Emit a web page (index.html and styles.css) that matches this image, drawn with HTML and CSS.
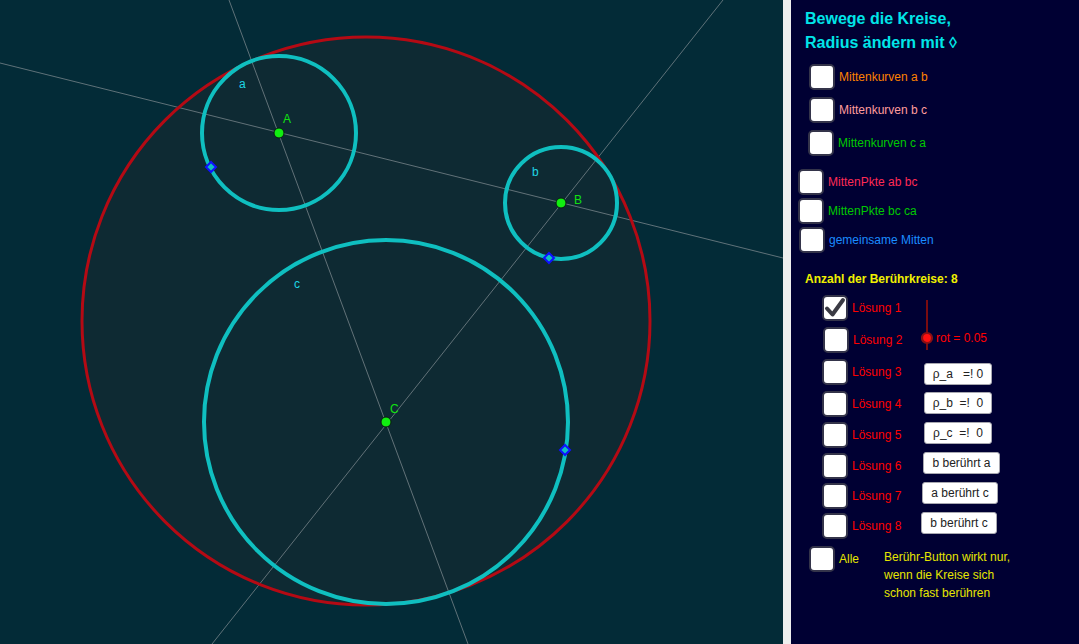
FILE: index.html
```html
<!DOCTYPE html>
<html lang="de">
<head>
<meta charset="utf-8">
<title>Berührkreise</title>
<link rel="stylesheet" href="styles.css">
</head>
<body>
<div class="app">
  <div class="canvas">
    <svg width="783" height="644" viewBox="0 0 783 644" xmlns="http://www.w3.org/2000/svg">
      <rect x="0" y="0" width="783" height="644" fill="#032b37"/>
      <circle cx="366" cy="321" r="284" fill="#0e2a33" stroke="none"/>
      <g stroke="#7d8a8f" stroke-width="1" stroke-opacity="0.75">
        <line x1="0" y1="63" x2="783" y2="258"/>
        <line x1="229" y1="0" x2="468" y2="644"/>
        <line x1="723" y1="0" x2="212" y2="644"/>
      </g>
      <circle cx="366" cy="321" r="284" fill="none" stroke="#b40a14" stroke-width="3"/>
      <g fill="none" stroke="#0fbfc0" stroke-width="4">
        <circle cx="279" cy="133" r="77"/>
        <circle cx="561" cy="203" r="56"/>
        <circle cx="386" cy="422" r="182"/>
      </g>
      <g fill="#0fbfc0" stroke="#1010ff" stroke-width="2">
        <polygon points="211,162 216,167 211,172 206,167"/>
        <polygon points="549,253 554,258 549,263 544,258"/>
        <polygon points="565,445 570,450 565,455 560,450"/>
      </g>
      <g fill="#11ee11" stroke="#0a1a10" stroke-width="1">
        <circle cx="279" cy="133" r="5"/>
        <circle cx="561" cy="203" r="5"/>
        <circle cx="386" cy="422" r="5"/>
      </g>
      <g class="lbl">
        <text x="239" y="88" fill="#1ed6e6">a</text>
        <text x="283" y="123" fill="#11e011">A</text>
        <text x="532" y="176" fill="#1ed6e6">b</text>
        <text x="574" y="204" fill="#11e011">B</text>
        <text x="294" y="288" fill="#1ed6e6">c</text>
        <text x="390" y="413" fill="#11e011">C</text>
      </g>
    </svg>
  </div>
  <div class="divider"></div>
  <div class="panel">
    <h1 class="title">Bewege die Kreise,<br>Radius ändern mit ◊</h1>

    <div class="group group-curves">
      <div class="row"><span class="box"></span><span class="c-orange">Mittenkurven a b</span></div>
      <div class="row"><span class="box"></span><span class="c-pink">Mittenkurven b c</span></div>
      <div class="row shift"><span class="box"></span><span class="c-green">Mittenkurven c a</span></div>
    </div>

    <div class="group group-points">
      <div class="row"><span class="box"></span><span class="c-crimson">MittenPkte ab bc</span></div>
      <div class="row"><span class="box"></span><span class="c-green">MittenPkte bc ca</span></div>
      <div class="row nudge"><span class="box"></span><span class="c-blue">gemeinsame Mitten</span></div>
    </div>

    <div class="heading">Anzahl der Berührkreise: 8</div>

    <div class="solutions">
      <div class="row"><span class="box checked"><svg width="22" height="22" viewBox="0 0 22 22"><path d="M3 11.5 L8.5 17.5 L19 3" fill="none" stroke="#3a3a44" stroke-width="4" stroke-linecap="round" stroke-linejoin="round"/></svg></span><span class="c-red">Lösung 1</span></div>
      <div class="slider">
        <svg width="14" height="58" viewBox="0 0 14 58">
          <line x1="6" y1="5" x2="6" y2="55" stroke="#7a0c10" stroke-width="2"/>
          <circle cx="6" cy="43" r="5" fill="#ff1010" stroke="#8a1014" stroke-width="2.2"/>
        </svg>
        <span class="c-red slider-label">rot = 0.05</span>
      </div>
      <div class="row r2"><span class="box"></span><span class="c-red">Lösung 2</span></div>
      <div class="row"><span class="box"></span><span class="c-red">Lösung 3</span></div>
      <div class="btn w68 m4">ρ_a   =! 0</div>
      <div class="row"><span class="box"></span><span class="c-red">Lösung 4</span></div>
      <div class="btn w68 m1">ρ_b  =!  0</div>
      <div class="row"><span class="box"></span><span class="c-red">Lösung 5</span></div>
      <div class="btn w68 m0">ρ_c  =!  0</div>
      <div class="row"><span class="box"></span><span class="c-red">Lösung 6</span></div>
      <div class="btn b1 mn">b berührt a</div>
      <div class="row"><span class="box"></span><span class="c-red">Lösung 7</span></div>
      <div class="btn b2 mn">a berührt c</div>
      <div class="row"><span class="box"></span><span class="c-red">Lösung 8</span></div>
      <div class="btn b3 mn">b berührt c</div>
    </div>

    <div class="footer">
      <div class="row"><span class="box"></span><span class="c-yellow">Alle</span></div>
      <p class="note">Berühr-Button wirkt nur,<br>wenn die Kreise sich<br>schon fast berühren</p>
    </div>
  </div>
</div>
</body>
</html>
```

FILE: styles.css
```css
* { box-sizing: border-box; }

html, body {
  margin: 0;
  padding: 0;
  background: #000033;
}

body {
  font-family: "Liberation Sans", Arial, "DejaVu Sans", sans-serif;
  font-size: 12px;
}

.app {
  display: flex;
  width: 1079px;
  height: 644px;
  overflow: hidden;
}

.canvas {
  width: 783px;
  height: 644px;
  flex: none;
}

.canvas svg { display: block; }

.lbl text {
  font-family: "Liberation Sans", Arial, sans-serif;
  font-size: 12px;
}

.divider {
  width: 8px;
  flex: none;
  background: #eeeeee;
}

.panel {
  flex: 1;
  background: #000033;
  padding: 7px 0 0 0;
  display: flex;
  flex-direction: column;
}

.title {
  margin: 0 0 0 14px;
  font-size: 16px;
  font-weight: bold;
  line-height: 24px;
  color: #00e5e8;
}

.row {
  display: flex;
  align-items: center;
  gap: 4px;
  height: 26px;
  white-space: nowrap;
}

.box {
  width: 26px;
  height: 26px;
  flex: none;
  background: #ffffff;
  border: 2px solid #34344a;
  border-radius: 5px;
  display: flex;
  align-items: center;
  justify-content: center;
}

.group {
  display: flex;
  flex-direction: column;
}

.group-curves {
  margin-top: 9px;
  padding-left: 18px;
  gap: 7px;
}

.group-curves .shift { margin-left: -1px; }

.group-points {
  margin-top: 13px;
  padding-left: 7px;
  gap: 3px;
}

.group-points .nudge { margin-left: 1px; }

.heading {
  margin: 19px 0 0 14px;
  line-height: 15px;
  font-weight: bold;
  color: #f0f000;
}

.solutions {
  margin-top: 8px;
  padding-left: 31px;
  display: grid;
  grid-template-columns: 100px auto;
  grid-template-rows: 32px 32px 32px 31px 31px 30px 30px 26px;
  align-items: start;
  justify-items: start;
}

.solutions .row { grid-column: 1; }
.solutions .r2 { margin-left: 1px; }

.slider {
  grid-column: 2;
  grid-row: 1 / span 2;
  align-self: start;
  display: flex;
  align-items: flex-end;
  margin-left: -1px;
}

.slider svg { display: block; }

.slider-label {
  line-height: 14px;
  padding-bottom: 8px;
  margin-left: 1px;
}

.btn {
  grid-column: 2;
  height: 22px;
  line-height: 20px;
  background: #ffffff;
  border: 1px solid #a8a8b0;
  border-radius: 3px;
  color: #222222;
  text-align: center;
  white-space: pre;
  margin-left: 2px;
}

.m4 { margin-top: 4px; }
.m1 { margin-top: 1px; }
.m0 { margin-top: 0; }
.mn { margin-top: -1px; }

.w68 { width: 68px; }
.b1 { width: 77px; margin-left: 1px; }
.b2 { width: 76px; margin-left: 0; }
.b3 { width: 76px; margin-left: -1px; }

.footer {
  margin-top: 7px;
  padding-left: 18px;
  display: flex;
  align-items: flex-start;
}

.footer .row { width: 75px; }

.note {
  margin: 2px 0 0 0;
  line-height: 18px;
  color: #e6e600;
}

.c-orange { color: #ff8000; }
.c-pink { color: #ff9c9c; }
.c-green { color: #00c800; }
.c-crimson { color: #ff2a55; }
.c-blue { color: #1a8cff; }
.c-red { color: #ff0000; }
.c-yellow { color: #e6e600; }
```
